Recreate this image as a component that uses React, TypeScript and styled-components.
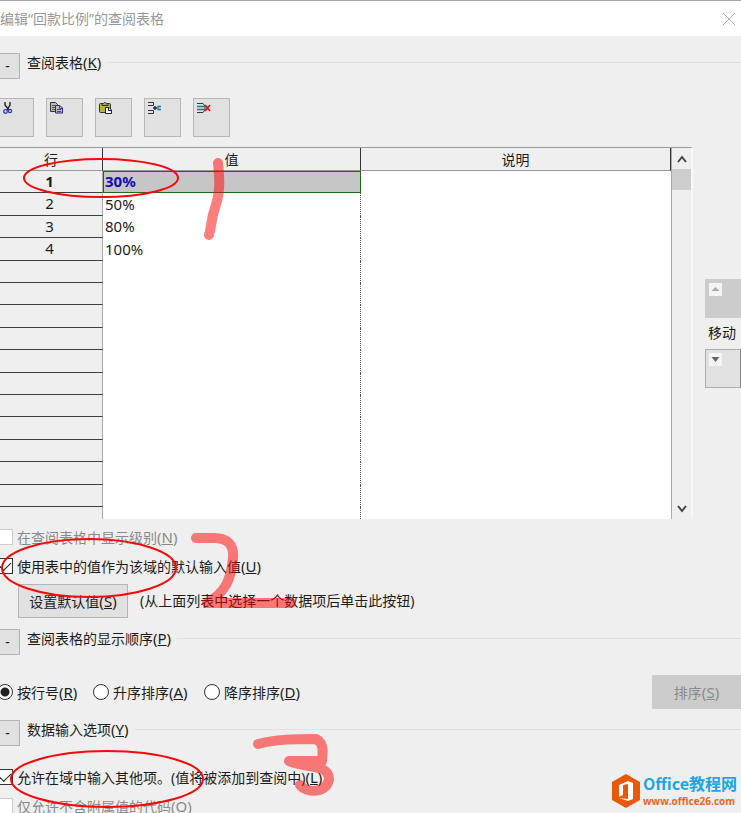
import React from "react";
import styled, { createGlobalStyle, css } from "styled-components";

const GlobalStyle = createGlobalStyle`
  *, *::before, *::after { box-sizing: border-box; }
  body {
    margin: 0;
    background: #efefef;
    color: #1c1c1c;
    font: 14px/20px "Noto Sans", "Noto Sans CJK SC", sans-serif;
  }
  button, input { font: inherit; color: inherit; margin: 0; padding: 0; }
`;

const Dialog = styled.main`
  position: relative;
  display: flex;
  flex-direction: column;
  height: 100vh;
  overflow: hidden;
`;

const TitleBar = styled.header`
  display: flex;
  flex: none;
  align-items: center;
  justify-content: space-between;
  height: 36px;
  padding-right: 5px;
  border-top: 1px solid #aaa8ac;
  background: #fff;
`;

const Title = styled.h1`
  margin: 0;
  color: #999;
  font-size: 14px;
  font-weight: 400;
`;

const CloseButton = styled.button`
  display: flex;
  border: 0;
  background: none;
`;

const SectionBar = styled.div<{ $top: number }>`
  display: flex;
  flex: none;
  align-items: flex-start;
  height: 26px;
  margin-top: ${(p) => p.$top}px;
`;

const CollapseButton = styled.button`
  width: 20px;
  height: 26px;
  margin-right: 7px;
  border: 1px solid #b4b4b4;
  border-left: 0;
  background: #e1e1e1;
  padding-right: 4px;
`;

const SectionTitle = styled.h2`
  display: flex;
  flex: 1;
  align-items: center;
  gap: 6px;
  height: 19px;
  margin: 0;
  font-size: 14px;
  font-weight: 400;
  &::after {
    content: "";
    flex: 1;
    border-top: 1px solid #e1e1e1;
  }
`;

const Accel = styled.span`
  font-size: 15px;
`;

const Toolbar = styled.div`
  display: flex;
  flex: none;
  gap: 12px;
  margin-top: 19px;
`;

const ToolButton = styled.button<{ $cut?: boolean }>`
  display: flex;
  align-items: flex-start;
  width: ${(p) => (p.$cut ? 34 : 37)}px;
  height: 39px;
  padding: ${(p) => (p.$cut ? "3px 0 0 1px" : "3px 0 0 3px")};
  border: 1px solid #b6b6b6;
  border-left-width: ${(p) => (p.$cut ? 0 : 1)}px;
  background: #e1e1e1;
`;

const GridArea = styled.div`
  display: flex;
  flex: none;
  margin-top: 10px;
`;

const Table = styled.table`
  flex: 1;
  table-layout: fixed;
  border-collapse: separate;
  border-spacing: 0;
  border-top: 1px solid #9a9a9a;
  border-right: 1px solid #aaa;
  background: #fff;
`;

const HeadCell = styled.th<{ $width?: number }>`
  width: ${(p) => (p.$width ? `${p.$width}px` : "auto")};
  height: 23px;
  padding: 2px 0 0;
  border-right: 1px solid #333;
  border-bottom: 1px solid #999;
  background: #efefef;
  font-weight: 400;
  line-height: 20px;
`;

const Row = styled.tr`
  height: 22px;
  &:nth-child(5n + 2), &:nth-child(5n + 4) { height: 23px; }
  &:last-child { height: 12px; }
`;

const RowHead = styled.th<{ $active?: boolean }>`
  padding: 0 3px 2px 0;
  border-right: 1px solid #aaa;
  border-bottom: 1px solid #3c3c3c;
  background: #efefef;
  font-size: 15px;
  font-weight: ${(p) => (p.$active ? 700 : 400)};
  line-height: 18px;
  ${Row}:last-child & { border-bottom: 0; }
`;

const Cell = styled.td<{ $active?: boolean }>`
  padding: 0 2px 2px;
  border-right: 1px dotted #555;
  font-size: 15px;
  line-height: 18px;
  ${(p) =>
    p.$active &&
    css`
      background: #c6c6c6;
      border-right: 0;
      box-shadow: inset 0 0 0 1px #1c6b1c;
      color: #1508b8;
      font-weight: 700;
    `}
  &:last-child { border-right: 0; }
`;

const ScrollBar = styled.div`
  display: flex;
  flex-direction: column;
  justify-content: space-between;
  width: 21px;
  border-top: 1px solid #9a9a9a;
  border-right: 2px solid #f8f8f8;
`;

const ScrollButton = styled.button`
  display: flex;
  align-items: center;
  justify-content: center;
  width: 100%;
  height: 21px;
  border: 0;
  background: none;
`;

const Thumb = styled.div`
  height: 21px;
  margin-bottom: auto;
  background: #cdcdcd;
`;

const MoveColumn = styled.div`
  display: flex;
  flex-direction: column;
  width: 36px;
  margin: 132px 0 0 12px;
  gap: 5px;
`;

const MoveButton = styled.button`
  display: flex;
  align-items: flex-start;
  height: 39px;
  padding: 3px;
  border: 1px solid #adadad;
  border-right-color: #888;
  background: #e1e1e1;
  &:disabled { border-color: #ccc; background: #ccc; }
`;

const MoveLabel = styled.span`
  padding: 0 0 1px 3px;
`;

const OptionLabel = styled.label<{ $muted?: boolean; $width?: number }>`
  display: flex;
  align-items: center;
  gap: 4px;
  width: ${(p) => (p.$width ? `${p.$width}px` : "auto")};
  color: ${(p) => (p.$muted ? "#8a8a8a" : "inherit")};
  white-space: nowrap;
`;

const OptionRow = styled.div<{ $top: number }>`
  display: flex;
  flex: none;
  align-items: center;
  height: 20px;
  margin: ${(p) => p.$top}px 0 0 -3px;
`;

const CheckBox = styled.input.attrs({ type: "checkbox" })`
  appearance: none;
  width: 16px;
  height: 16px;
  border: 1px solid #333;
  background: #fff;
  &:disabled { border-color: #ccc; }
  &:checked::after {
    content: "";
    display: block;
    width: 11px;
    height: 6px;
    margin: 3px 0 0 2px;
    border: solid #222;
    border-width: 0 0 1px 1px;
    transform: rotate(-45deg);
  }
`;

const Radio = styled.input.attrs({ type: "radio" })`
  appearance: none;
  width: 16px;
  height: 16px;
  border: 1px solid #333;
  border-radius: 50%;
  background: #fff;
  &:checked { background: radial-gradient(circle, #222 0 4px, #fff 5px); }
`;

const DefaultRow = styled.div`
  display: flex;
  flex: none;
  align-items: center;
  gap: 12px;
  margin: 8px 0 0 18px;
`;

const PushButton = styled.button<{ $width: number }>`
  width: ${(p) => p.$width}px;
  height: 34px;
  border: 1px solid #b4b4b4;
  background: #e1e1e1;
  &:disabled { border-color: #ccc; background: #ccc; color: #8a8a8a; }
`;

const OrderRow = styled.div`
  display: flex;
  flex: none;
  align-items: center;
  margin: 20px 0 0 -3px;
`;

const SortSlot = styled.div`
  display: flex;
  margin-left: auto;
`;

const Marks = styled.svg`
  position: absolute;
  top: 0;
  left: 0;
  pointer-events: none;
`;

const Brand = styled.a`
  position: absolute;
  right: 4px;
  bottom: 5px;
  display: flex;
  align-items: center;
  gap: 3px;
  text-decoration: none;
`;

const BrandText = styled.span`
  display: flex;
  flex-direction: column;
  gap: 1px;
  color: #f0641e;
`;

const BrandName = styled.strong`
  color: #1ea5e6;
  font: 700 16px/20px "Noto Sans CJK SC", sans-serif;
`;

const BrandUrl = styled.span`
  font: 700 10px/14px "Open Sans", sans-serif;
`;

const Key = ({ k }: { k: string }) => (
  <Accel>
    (<u>{k}</u>)
  </Accel>
);

const CutIcon = () => (
  <svg width="14" height="14" viewBox="0 0 14 14" fill="none">
    <path d="M4 0v3l4 5M9 0v3L6 8" stroke="#222" strokeWidth="1.4" />
    <circle cx="4.5" cy="9.5" r="1.8" stroke="#3838a8" strokeWidth="1.3" />
    <circle cx="9" cy="9" r="1.6" stroke="#3838a8" strokeWidth="1.3" />
  </svg>
);

const CopyIcon = () => (
  <svg width="14" height="14" viewBox="0 0 14 14" fill="none">
    <path d="M.5.5h5l2 2v7h-7z" fill="#bbb" stroke="#333" />
    <path d="M2 3.500h3M2 5.500h4M2 7.500h4" stroke="#555" />
    <path d="M5.500 3.500h4.500l2.500 2.500v5h-7z" fill="#bbb" stroke="#26268c" />
    <path d="M9.500 3.500v3h3M7 7.500h4M7 9.500h4" stroke="#4444a0" />
  </svg>
);

const PasteIcon = () => (
  <svg width="14" height="14" viewBox="0 0 14 14" fill="none">
    <rect x=".5" y="1.500" width="11" height="9" rx="1" fill="#b4b82e" stroke="#333" />
    <path d="M3 1.500h1.500l1-1h1l1 1H9v2H3z" fill="#999" stroke="#333" />
    <path d="M6.500 5.500h3.500l2.500 2.500v3.500h-6z" fill="#fff" stroke="#222" />
    <path d="M9.500 5.500v3h3" stroke="#222" />
  </svg>
);

const InsertIcon = () => (
  <svg width="14" height="14" viewBox="0 0 14 14" fill="none">
    <path d="M0 .5h5.500v3H0M0 8.500h5.500v3H0" stroke="#333" />
    <path d="M5 6h4M7 4v4" stroke="#1a1a80" strokeWidth="1.300" />
    <path d="M13 4.500h-3v3h3" stroke="#168080" strokeWidth="1.400" />
  </svg>
);

const DeleteIcon = () => (
  <svg width="14" height="14" viewBox="0 0 14 14" fill="none">
    <path d="M0 1.500h6l2 2.500M0 10.500h6l2-2.500" stroke="#333" />
    <path d="M0 4.500h8v3H0" stroke="#168080" strokeWidth="1.400" />
    <path d="M8 3l5 6M13 3L8 9" stroke="#e8141c" strokeWidth="1.700" />
  </svg>
);

const Chevron = ({ down = false }: { down?: boolean }) => (
  <svg width="12" height="8" viewBox="0 0 12 8" fill="none">
    <path d={down ? "M2 1l4 5 4-5" : "M2 7l4-5 4 5"} stroke="#444" strokeWidth="2" />
  </svg>
);

const MoveIcon = ({ down = false }: { down?: boolean }) => (
  <svg width="13" height="13" viewBox="0 0 13 13">
    <path d="M0 0h13v13H0z" fill="#f4f4f4" />
    <path d={down ? "M2.500 4h8l-4 5z" : "M2.500 8l4-4 4 4z"} fill={down ? "#666" : "#aaa"} />
  </svg>
);

const tools = [
  { name: "剪切", icon: <CutIcon /> },
  { name: "复制", icon: <CopyIcon /> },
  { name: "粘贴", icon: <PasteIcon /> },
  { name: "插入行", icon: <InsertIcon /> },
  { name: "删除行", icon: <DeleteIcon /> },
];

const values = ["30%", "50%", "80%", "100%"];
const rows = Array.from({ length: 16 }, (_, i) => values[i] ?? "");

const orders = [
  { text: "按行号", k: "R", width: 96 },
  { text: "升序排序", k: "A", width: 111 },
  { text: "降序排序", k: "D", width: 111 },
];

export default function App() {
  return (
    <Dialog>
      <GlobalStyle />
      <TitleBar>
        <Title>编辑“回款比例”的查阅表格</Title>
        <CloseButton aria-label="关闭">
          <svg width="14" height="14" viewBox="0 0 14 14" stroke="#aaa">
            <path d="M1 1l12 12M13 1L1 13" />
          </svg>
        </CloseButton>
      </TitleBar>

      <SectionBar $top={17}>
        <CollapseButton>-</CollapseButton>
        <SectionTitle><span>查阅表格<Key k="K" /></span></SectionTitle>
      </SectionBar>

      <Toolbar>
        {tools.map((t, i) => (
          <ToolButton key={t.name} aria-label={t.name} $cut={i === 0}>{t.icon}</ToolButton>
        ))}
      </Toolbar>

      <GridArea>
        <Table>
          <thead>
            <tr>
              <HeadCell $width={103}>行</HeadCell>
              <HeadCell $width={258}>值</HeadCell>
              <HeadCell>说明</HeadCell>
            </tr>
          </thead>
          <tbody>
            {rows.map((value, i) => (
              <Row key={i}>
                <RowHead $active={i === 0}>{value && i + 1}</RowHead>
                <Cell $active={i === 0}>{value}</Cell>
                <Cell />
              </Row>
            ))}
          </tbody>
        </Table>
        <ScrollBar>
          <ScrollButton aria-label="向上滚动"><Chevron /></ScrollButton>
          <Thumb />
          <ScrollButton aria-label="向下滚动"><Chevron down /></ScrollButton>
        </ScrollBar>
        <MoveColumn>
          <MoveButton disabled aria-label="上移"><MoveIcon /></MoveButton>
          <MoveLabel>移动</MoveLabel>
          <MoveButton aria-label="下移"><MoveIcon down /></MoveButton>
        </MoveColumn>
      </GridArea>

      <OptionRow $top={8}>
        <OptionLabel $muted>
          <CheckBox disabled />
          <span>在查阅表格中显示级别<Key k="N" /></span>
        </OptionLabel>
      </OptionRow>
      <OptionRow $top={9}>
        <OptionLabel>
          <CheckBox defaultChecked />
          <span>使用表中的值作为该域的默认输入值<Key k="U" /></span>
        </OptionLabel>
      </OptionRow>
      <DefaultRow>
        <PushButton $width={110}>设置默认值<Key k="S" /></PushButton>
        <span>(从上面列表中选择一个数据项后单击此按钮)</span>
      </DefaultRow>

      <SectionBar $top={11}>
        <CollapseButton>-</CollapseButton>
        <SectionTitle><span>查阅表格的显示顺序<Key k="P" /></span></SectionTitle>
      </SectionBar>
      <OrderRow>
        {orders.map((o, i) => (
          <OptionLabel key={o.k} $width={o.width}>
            <Radio name="order" defaultChecked={i === 0} />
            <span>{o.text}<Key k={o.k} /></span>
          </OptionLabel>
        ))}
        <SortSlot>
          <PushButton $width={89} disabled>排序<Key k="S" /></PushButton>
        </SortSlot>
      </OrderRow>

      <SectionBar $top={11}>
        <CollapseButton>-</CollapseButton>
        <SectionTitle><span>数据输入选项<Key k="Y" /></span></SectionTitle>
      </SectionBar>
      <OptionRow $top={21}>
        <OptionLabel>
          <CheckBox defaultChecked />
          <span>允许在域中输入其他项。(值将被添加到查阅中)<Key k="L" /></span>
        </OptionLabel>
      </OptionRow>
      <OptionRow $top={9}>
        <OptionLabel $muted>
          <CheckBox disabled />
          <span>仅允许不含附属值的代码<Key k="O" /></span>
        </OptionLabel>
      </OptionRow>

      <Marks width="741" height="813" viewBox="0 0 741 813" fill="none" aria-hidden="true">
        <g stroke="#f50a0a" strokeWidth="2">
          <ellipse cx="101" cy="178" rx="77" ry="19" />
          <ellipse cx="89" cy="568" rx="87" ry="29" />
          <ellipse cx="107" cy="779" rx="96" ry="28" />
        </g>
        <g stroke="#ff0000" strokeOpacity=".5" strokeWidth="10" strokeLinecap="round" strokeLinejoin="round">
          <path d="M218 163C220 182 220 194 215 208C211 219 212 224 209 235" />
          <path d="M196 538H214C228 538 234 545 233 558C231 579 226 592 207 603H291" />
          <path d="M258 744C276 739 296 739 316 739C324 743 323 752 322 761H289C301 768 329 763 329 779C327 793 307 794 300 785" />
        </g>
      </Marks>

      <Brand href="#">
        <svg width="28" height="34" viewBox="0 0 28 34">
          <path d="M14 0l14 8v18l-14 8L0 26V8z" fill="#e8590c" />
          <path d="M7 11l9-4 5 2v16l-5 2-9-3 9 1V10l-5 1v10l-4 2z" fill="#fff" />
        </svg>
        <BrandText>
          <BrandName>Office教程网</BrandName>
          <BrandUrl>www.office26.com</BrandUrl>
        </BrandText>
      </Brand>
    </Dialog>
  );
}
